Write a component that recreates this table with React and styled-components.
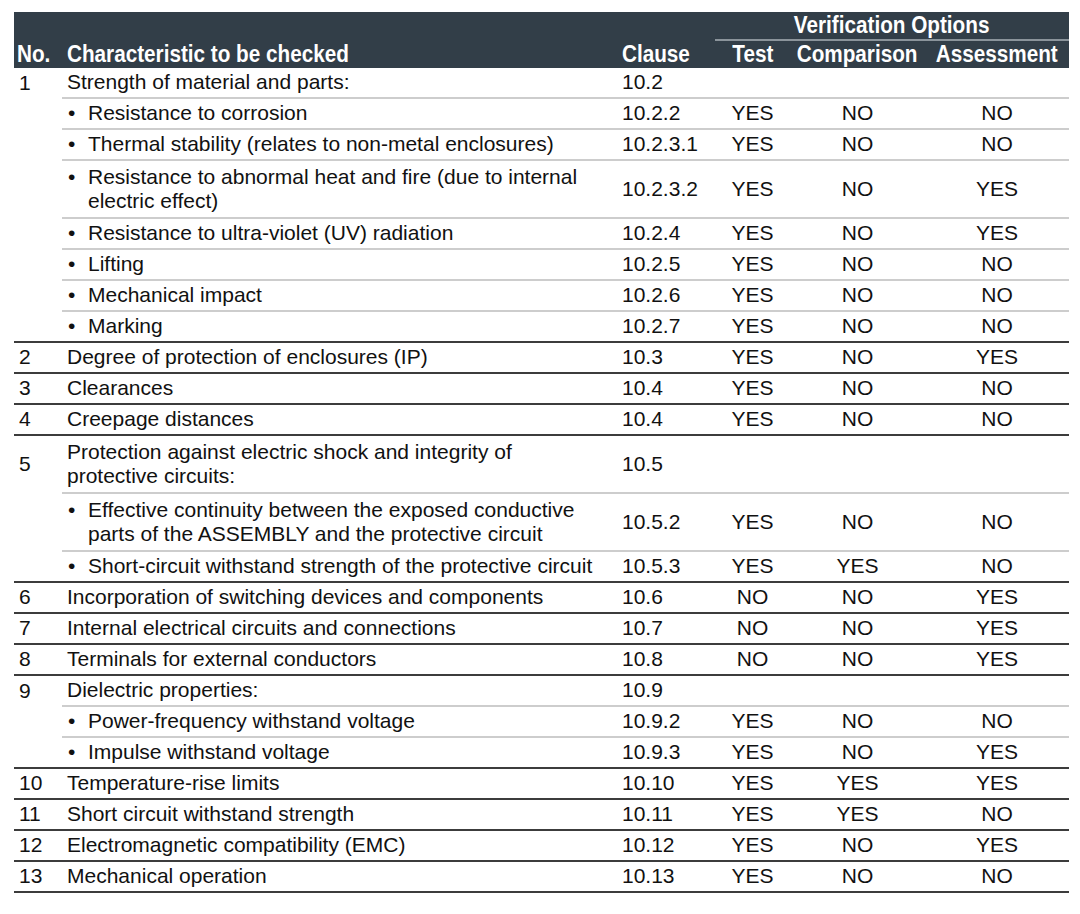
import React from "react";
import styled, { createGlobalStyle } from "styled-components";

const GlobalStyle = createGlobalStyle`
body {
  margin: 0;
  padding: 0;
  background: #ffffff;
  font-family: "Liberation Sans", Arial, sans-serif;
  color: #111;
}
`;

const Page = styled.div`
  padding: 12px 11px 0 14px;
`;

const Table = styled.table`
  width: 1055px;
  border-collapse: collapse;
  table-layout: fixed;
  font-size: 21px;
`;

const HeadCell = styled.th`
  background: #323e48;
  color: #ffffff;
  font-weight: bold;
  font-size: 23px;
  line-height: 25px;
  padding: 0 ${(p) => (p.$align === "left" ? 0 : 5)}px 1px ${(p) => p.$indent ?? 5}px;
  vertical-align: bottom;
  white-space: nowrap;
`;

const GroupHead = styled(HeadCell)`
  border-bottom: 2px solid #8b949b;
  height: 26px;
`;

// condensed bold, like Arial Narrow
const HeadInner = styled.div`
  display: flex;
  justify-content: ${(p) => (p.$align === "left" ? "flex-start" : "center")};
`;

const HeadText = styled.span`
  display: inline-block;
  transform: scaleX(0.9);
  transform-origin: ${(p) => (p.$align === "left" ? "left" : "center")} bottom;
`;

const Cell = styled.td`
  padding: ${(p) => (p.$tall ? "4px" : "2px")} ${(p) => (p.$wide ? 14 : 5)}px
    ${(p) => (p.$tall ? "4px" : "3px")} 5px;
  line-height: 24px;
  vertical-align: middle;
  text-align: ${(p) => (p.$center ? "center" : "left")};
  border-top: ${(p) =>
    p.$group ? "2px solid #3c3c3c" : p.$sub ? "2px solid #cdcdcd" : "none"};
`;

const Bulleted = styled.div`
  display: flex;
`;

const Bullet = styled.span`
  width: 20px;
  flex: none;
  padding-left: 1px;
`;

const LastRow = styled.tr`
  border-bottom: 2px solid #3c3c3c;
`;

const rows = [
  { no: "1", text: "Strength of material and parts:", clause: "10.2" },
  { text: "Resistance to corrosion", clause: "10.2.2", v: ["YES", "NO", "NO"], bullet: true },
  { text: "Thermal stability (relates to non-metal enclosures)", clause: "10.2.3.1", v: ["YES", "NO", "NO"], bullet: true },
  { text: "Resistance to abnormal heat and fire (due to internal electric effect)", clause: "10.2.3.2", v: ["YES", "NO", "YES"], bullet: true, tall: true },
  { text: "Resistance to ultra-violet (UV) radiation", clause: "10.2.4", v: ["YES", "NO", "YES"], bullet: true },
  { text: "Lifting", clause: "10.2.5", v: ["YES", "NO", "NO"], bullet: true },
  { text: "Mechanical impact", clause: "10.2.6", v: ["YES", "NO", "NO"], bullet: true },
  { text: "Marking", clause: "10.2.7", v: ["YES", "NO", "NO"], bullet: true },
  { no: "2", text: "Degree of protection of enclosures (IP)", clause: "10.3", v: ["YES", "NO", "YES"] },
  { no: "3", text: "Clearances", clause: "10.4", v: ["YES", "NO", "NO"] },
  { no: "4", text: "Creepage distances", clause: "10.4", v: ["YES", "NO", "NO"] },
  { no: "5", text: "Protection against electric shock and integrity of protective circuits:", clause: "10.5", tall: true },
  { text: "Effective continuity between the exposed conductive parts of the ASSEMBLY and the protective circuit", clause: "10.5.2", v: ["YES", "NO", "NO"], bullet: true, tall: true },
  { text: "Short-circuit withstand strength of the protective circuit", clause: "10.5.3", v: ["YES", "YES", "NO"], bullet: true },
  { no: "6", text: "Incorporation of switching devices and components", clause: "10.6", v: ["NO", "NO", "YES"] },
  { no: "7", text: "Internal electrical circuits and connections", clause: "10.7", v: ["NO", "NO", "YES"] },
  { no: "8", text: "Terminals for external conductors", clause: "10.8", v: ["NO", "NO", "YES"] },
  { no: "9", text: "Dielectric properties:", clause: "10.9" },
  { text: "Power-frequency withstand voltage", clause: "10.9.2", v: ["YES", "NO", "NO"], bullet: true },
  { text: "Impulse withstand voltage", clause: "10.9.3", v: ["YES", "NO", "YES"], bullet: true },
  { no: "10", text: "Temperature-rise limits", clause: "10.10", v: ["YES", "YES", "YES"] },
  { no: "11", text: "Short circuit withstand strength", clause: "10.11", v: ["YES", "YES", "NO"] },
  { no: "12", text: "Electromagnetic compatibility (EMC)", clause: "10.12", v: ["YES", "NO", "YES"] },
  { no: "13", text: "Mechanical operation", clause: "10.13", v: ["YES", "NO", "NO"] },
];

function Head({ align, indent, ...rest }) {
  return (
    <HeadCell $align={align} $indent={indent} {...rest}>
      <HeadInner $align={align}>
        <HeadText $align={align}>{rest.children}</HeadText>
      </HeadInner>
    </HeadCell>
  );
}

function Row({ row, first, last }) {
  const isGroup = !!row.no;
  const group = isGroup && !first;
  const sub = !isGroup;
  const v = row.v || ["", "", ""];
  const Tr = last ? LastRow : "tr";
  return (
    <Tr>
      <Cell $group={group}>{row.no}</Cell>
      <Cell $group={group} $sub={sub} $tall={row.tall} $wide>
        {row.bullet ? (
          <Bulleted>
            <Bullet>•</Bullet>
            <span>{row.text}</span>
          </Bulleted>
        ) : (
          row.text
        )}
      </Cell>
      <Cell $group={group} $sub={sub}>{row.clause}</Cell>
      {v.map((x, i) => (
        <Cell key={i} $center $group={group} $sub={sub}>
          {x}
        </Cell>
      ))}
    </Tr>
  );
}

export default function App() {
  return (
    <Page>
      <GlobalStyle />
      <Table>
        <colgroup>
          <col style={{ width: 48 }} />
          <col style={{ width: 555 }} />
          <col style={{ width: 98 }} />
          <col style={{ width: 75 }} />
          <col style={{ width: 135 }} />
          <col style={{ width: 144 }} />
        </colgroup>
        <thead>
          <tr>
            <Head rowSpan={2} align="left" indent={3}>No.</Head>
            <Head rowSpan={2} align="left">Characteristic to be checked</Head>
            <Head rowSpan={2} align="left">Clause</Head>
            <GroupHead colSpan={3}>
              <HeadInner>
                <HeadText>Verification Options</HeadText>
              </HeadInner>
            </GroupHead>
          </tr>
          <tr>
            <Head style={{ height: 26 }}>Test</Head>
            <Head>Comparison</Head>
            <Head>Assessment</Head>
          </tr>
        </thead>
        <tbody>
          {rows.map((r, i) => (
            <Row key={i} row={r} first={i === 0} last={i === rows.length - 1} />
          ))}
        </tbody>
      </Table>
    </Page>
  );
}
